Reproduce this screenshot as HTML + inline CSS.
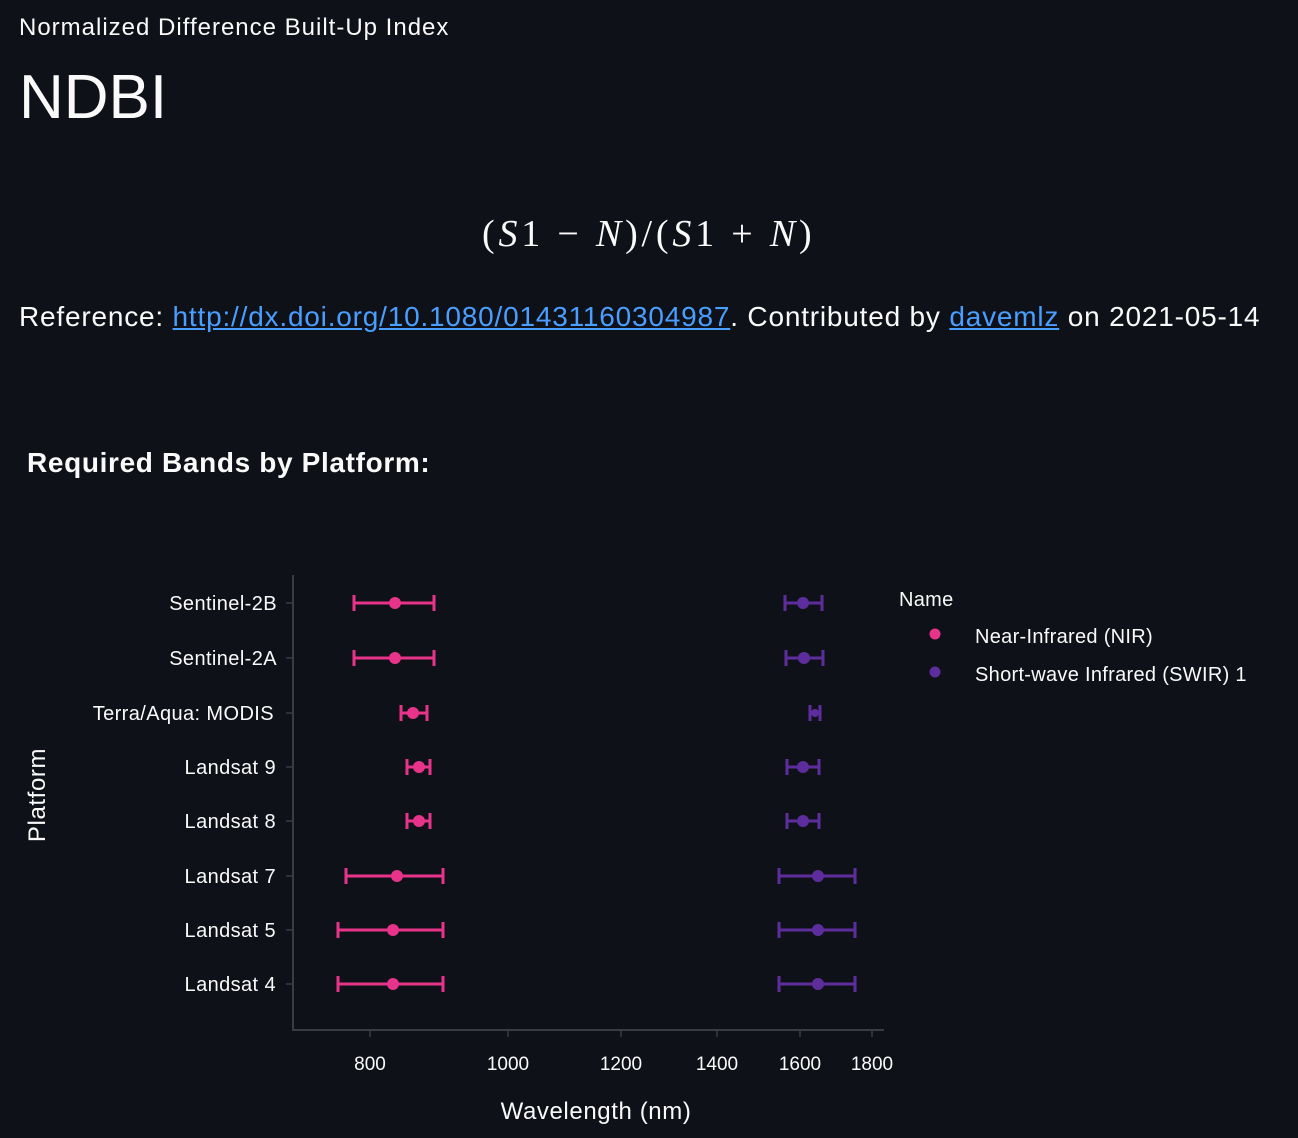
<!DOCTYPE html>
<html><head><meta charset="utf-8"><style>
body{margin:0;width:1298px;height:1138px;background:#0e1117;color:#fafafa;font-family:"Liberation Sans",sans-serif;overflow:hidden;position:relative}
.a{position:absolute;white-space:nowrap}
a{color:#4a9eff;text-decoration:underline}
</style></head><body>
<div class="a" style="left:19px;top:14px;font-size:24px;letter-spacing:1px">Normalized Difference Built-Up Index</div>
<div class="a" style="left:19px;top:62px;font-size:62px">NDBI</div>
<div class="a" style="left:482px;top:212px;font-size:38px;letter-spacing:3.8px;font-family:'Liberation Serif',serif">(<i>S</i>1 − <i>N</i>)/(<i>S</i>1 + <i>N</i>)</div>
<div class="a" style="left:19px;top:301px;font-size:28px;letter-spacing:0.8px">Reference: <a>http://dx.doi.org/10.1080/01431160304987</a>. Contributed by <a>davemlz</a> on 2021-05-14</div>
<div class="a" style="left:27px;top:447px;font-size:28px;font-weight:bold;letter-spacing:0.65px">Required Bands by Platform:</div>
<svg class="a" style="left:0;top:0" width="1298" height="1138">
<g stroke="#3a3c44" stroke-width="2">
<line x1="293" y1="575" x2="293" y2="1031"/><line x1="292" y1="1030" x2="884" y2="1030"/>
</g>
<g stroke="#3a3c44" stroke-width="1.5">
<line x1="286" y1="603" x2="293" y2="603"/><line x1="286" y1="658" x2="293" y2="658"/><line x1="286" y1="713" x2="293" y2="713"/><line x1="286" y1="767" x2="293" y2="767"/><line x1="286" y1="821" x2="293" y2="821"/><line x1="286" y1="876" x2="293" y2="876"/><line x1="286" y1="930" x2="293" y2="930"/><line x1="286" y1="984" x2="293" y2="984"/>
<line x1="370" y1="1030" x2="370" y2="1037"/><line x1="508" y1="1030" x2="508" y2="1037"/><line x1="621" y1="1030" x2="621" y2="1037"/><line x1="717" y1="1030" x2="717" y2="1037"/><line x1="800" y1="1030" x2="800" y2="1037"/><line x1="872" y1="1030" x2="872" y2="1037"/>
</g>
<g font-size="20" fill="#fafafa" text-anchor="end" font-family="Liberation Sans,sans-serif" letter-spacing="0.4">
<text x="277" y="610">Sentinel-2B</text><text x="277" y="665">Sentinel-2A</text><text x="274" y="720">Terra/Aqua: MODIS</text><text x="276" y="774">Landsat 9</text><text x="276" y="828">Landsat 8</text><text x="276" y="883">Landsat 7</text><text x="276" y="937">Landsat 5</text><text x="276" y="991">Landsat 4</text>
</g>
<g font-size="19" fill="#fafafa" text-anchor="middle" font-family="Liberation Sans,sans-serif">
<text x="370" y="1070">800</text><text x="508" y="1070">1000</text><text x="621" y="1070">1200</text><text x="717" y="1070">1400</text><text x="800" y="1070">1600</text><text x="872" y="1070">1800</text>
<text x="596" y="1119" font-size="24" letter-spacing="0.6">Wavelength (nm)</text>
<text transform="translate(45,795) rotate(-90)" font-size="24" letter-spacing="0.6">Platform</text>
</g>
<g stroke="#e8338a" stroke-width="3" fill="#e8338a">
<path d="M354 603H434M354 595V611M434 595V611M354 658H434M354 650V666M434 650V666M401 713H427M401 705V721M427 705V721M407 767H430M407 759V775M430 759V775M407 821H430M407 813V829M430 813V829M346 876H443M346 868V884M443 868V884M338 930H443M338 922V938M443 922V938M338 984H443M338 976V992M443 976V992"/>
<g stroke="none"><circle cx="395" cy="603" r="6"/><circle cx="395" cy="658" r="6"/><circle cx="413" cy="713" r="6"/><circle cx="419" cy="767" r="6"/><circle cx="419" cy="821" r="6"/><circle cx="397" cy="876" r="6"/><circle cx="393" cy="930" r="6"/><circle cx="393" cy="984" r="6"/></g>
</g>
<g stroke="#5d2d9e" stroke-width="3" fill="#5d2d9e">
<path d="M785 603H822M785 595V611M822 595V611M786 658H823M786 650V666M823 650V666M810 713H820M810 705V721M820 705V721M787 767H819M787 759V775M819 759V775M787 821H819M787 813V829M819 813V829M779 876H855M779 868V884M855 868V884M779 930H855M779 922V938M855 922V938M779 984H855M779 976V992M855 976V992"/>
<g stroke="none"><circle cx="803" cy="603" r="6"/><circle cx="804" cy="658" r="6"/><circle cx="815" cy="713" r="4"/><circle cx="803" cy="767" r="6"/><circle cx="803" cy="821" r="6"/><circle cx="818" cy="876" r="6"/><circle cx="818" cy="930" r="6"/><circle cx="818" cy="984" r="6"/></g>
</g>
<circle cx="935" cy="634" r="5.5" fill="#e8338a"/><circle cx="935" cy="672" r="5.5" fill="#5d2d9e"/>
<g font-size="20" fill="#fafafa" font-family="Liberation Sans,sans-serif" letter-spacing="0.3">
<text x="899" y="606">Name</text><text x="975" y="643">Near-Infrared (NIR)</text><text x="975" y="681">Short-wave Infrared (SWIR) 1</text>
</g>
</svg>
</body></html>
